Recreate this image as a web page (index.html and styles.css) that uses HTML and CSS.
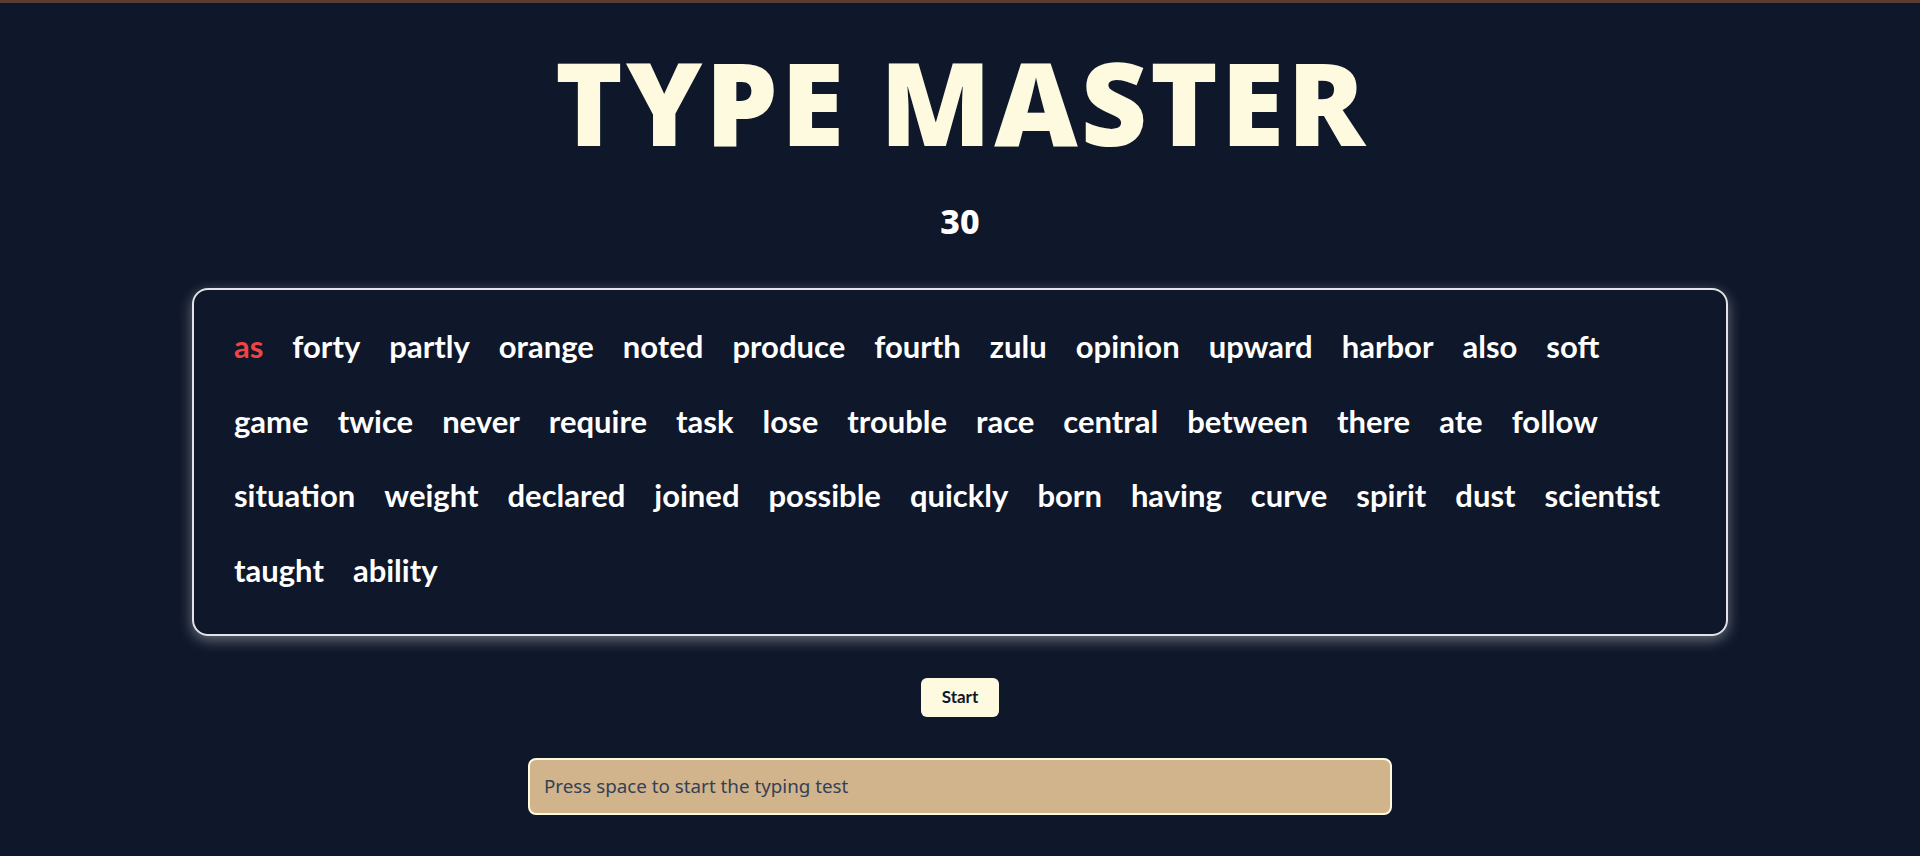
FILE: index.html
```html
<!DOCTYPE html>
<html lang="en">
<head>
<meta charset="utf-8">
<title>Type Master</title>
<link rel="stylesheet" href="styles.css">
</head>
<body>
<main class="app">
  <h1 class="title">TYPE MASTER</h1>
  <div class="timer">30</div>
  <section class="words-box">
    <div class="words">
      <span class="word current">as</span>
      <span class="word">forty</span>
      <span class="word">partly</span>
      <span class="word">orange</span>
      <span class="word">noted</span>
      <span class="word">produce</span>
      <span class="word">fourth</span>
      <span class="word">zulu</span>
      <span class="word">opinion</span>
      <span class="word">upward</span>
      <span class="word">harbor</span>
      <span class="word">also</span>
      <span class="word">soft</span>
      <span class="word">game</span>
      <span class="word">twice</span>
      <span class="word">never</span>
      <span class="word">require</span>
      <span class="word">task</span>
      <span class="word">lose</span>
      <span class="word">trouble</span>
      <span class="word">race</span>
      <span class="word">central</span>
      <span class="word">between</span>
      <span class="word">there</span>
      <span class="word">ate</span>
      <span class="word">follow</span>
      <span class="word">situation</span>
      <span class="word">weight</span>
      <span class="word">declared</span>
      <span class="word">joined</span>
      <span class="word">possible</span>
      <span class="word">quickly</span>
      <span class="word">born</span>
      <span class="word">having</span>
      <span class="word">curve</span>
      <span class="word">spirit</span>
      <span class="word">dust</span>
      <span class="word">scientist</span>
      <span class="word">taught</span>
      <span class="word">ability</span>
    </div>
  </section>
  <button class="start-btn" type="button">Start</button>
  <input class="type-input" type="text" placeholder="Press space to start the typing test">
</main>
</body>
</html>
```

FILE: styles.css
```css
* {
  box-sizing: border-box;
}

html, body {
  margin: 0;
  padding: 0;
}

body {
  background: #0f172a;
  border-top: 3px solid #583c2f;
  min-height: 100vh;
  font-family: "Lato", "Noto Sans", sans-serif;
  overflow: hidden;
}

.app {
  display: flex;
  flex-direction: column;
  align-items: center;
}

.title {
  margin: 41px 0 0;
  font-family: "Noto Sans", sans-serif;
  font-weight: 900;
  font-size: 115px;
  line-height: 115px;
  color: #fefae0;
  letter-spacing: 3px;
  text-indent: 3px;
  white-space: nowrap;
}

.timer {
  margin-top: 42px;
  font-family: "Noto Sans", sans-serif;
  font-weight: 800;
  font-size: 34px;
  line-height: 40px;
  color: #ffffff;
}

.words-box {
  margin-top: 47px;
  width: 80%;
  border: 2px solid #e2e4e9;
  border-radius: 16px;
  box-shadow: 0 4px 14px rgba(255, 255, 255, 0.38);
  padding: 38px 40px 46px;
}

.words {
  display: flex;
  flex-wrap: wrap;
  column-gap: 29px;
  row-gap: 38.5px;
}

.word {
  font-family: "Lato", sans-serif;
  font-weight: 700;
  font-size: 31px;
  line-height: 36px;
  color: #ffffff;
}

.word.current {
  color: #ef4444;
}

.start-btn {
  margin-top: 42px;
  height: 39px;
  padding: 0 21px;
  border: none;
  border-radius: 6px;
  background: #fefae0;
  color: #0f172a;
  font-family: "Lato", sans-serif;
  font-weight: 700;
  font-size: 17px;
  line-height: 20px;
  cursor: pointer;
}

.type-input {
  margin-top: 41px;
  width: 45%;
  height: 57px;
  padding: 0 14px;
  border: 2px solid #fefae0;
  border-radius: 8px;
  background: #d2b48c;
  color: #334155;
  font-family: "Noto Sans", sans-serif;
  font-size: 18.8px;
  outline: none;
}

.type-input::placeholder {
  color: #334155;
  opacity: 1;
}
```
